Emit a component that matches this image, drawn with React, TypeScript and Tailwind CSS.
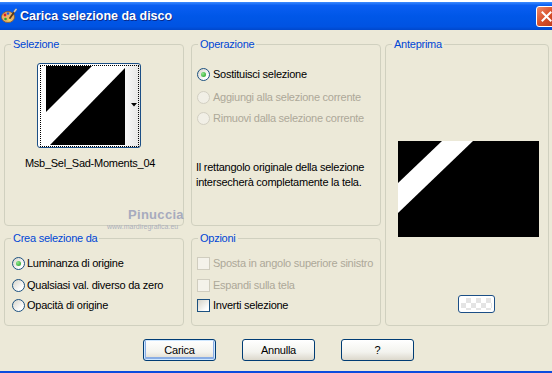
import React from "react";

function Radio({ checked = false, disabled = false }: { checked?: boolean; disabled?: boolean }) {
  return (
    <span
      className={
        disabled
          ? "w-[13px] h-[13px] rounded-full border border-[#D2CFC2] bg-[#F1EFE6] shrink-0 flex items-center justify-center"
          : "w-[13px] h-[13px] rounded-full border border-[#1C5180] bg-[linear-gradient(135deg,#D6D3C8,#FFFFFF_75%)] shrink-0 flex items-center justify-center"
      }
    >
      {checked && (
        <span className="w-[5px] h-[5px] rounded-full bg-[radial-gradient(circle_at_35%_35%,#8EE88E,#1E9A1E)]" />
      )}
    </span>
  );
}

function Check({ disabled = false }: { disabled?: boolean }) {
  return (
    <span
      className={
        disabled
          ? "w-[13px] h-[13px] border border-[#D0CDBF] bg-[#F4F2EA] shrink-0"
          : "w-[13px] h-[13px] border border-[#1C5180] bg-[linear-gradient(135deg,#D6D3C8,#FFFFFF_80%)] shrink-0"
      }
    />
  );
}

function Group({ title, className, children }: { title: string; className: string; children?: React.ReactNode }) {
  return (
    <fieldset className={"border border-[#D0D0BF] rounded-[4px] " + className}>
      <legend className="ml-[6px] px-[2px] leading-[14px] text-[#0046D5]">{title}</legend>
      {children}
    </fieldset>
  );
}

function XPButton({ label, def = false }: { label: string; def?: boolean }) {
  return (
    <div
      className={
        def
          ? "w-[73px] h-[22px] rounded-[3px] border border-[#003C74] bg-[linear-gradient(to_bottom,#FFFFFF,#F3F3EE_60%,#DCD8CC)] shadow-[inset_0_0_0_1px_#CEE7FF,inset_0_-1px_0_2px_#89ADE4] flex items-center justify-center"
          : "w-[73px] h-[22px] rounded-[3px] border border-[#003C74] bg-[linear-gradient(to_bottom,#FFFFFF,#F3F3EE_60%,#DCD8CC)] flex items-center justify-center"
      }
    >
      {label}
    </div>
  );
}

export default function App() {
  return (
    <div className="relative w-[552px] h-[373px] overflow-hidden bg-[#ECE9D8] font-['Liberation_Sans',Arial,sans-serif] text-[11px] tracking-[-0.25px] text-black flex flex-col">
      {/* strip of window behind */}
      <div className="h-[2px] bg-white shrink-0" />
      {/* title bar */}
      <div className="h-[28px] shrink-0 flex items-center bg-[linear-gradient(to_bottom,#3D8BFF_0%,#0A5EF2_12%,#0057E8_50%,#0053E2_88%,#0047CC_100%)]">
        <svg width="16" height="16" viewBox="0 0 16 16" className="ml-[1px] shrink-0">
          <ellipse cx="7" cy="9" rx="6.5" ry="5.5" fill="#E9B56A" stroke="#8A5A2A" strokeWidth="0.8" />
          <circle cx="4" cy="7" r="1.4" fill="#D22" />
          <circle cx="7" cy="5.5" r="1.3" fill="#2A5BD8" />
          <circle cx="4.5" cy="11" r="1.3" fill="#2CA02C" />
          <circle cx="8.5" cy="12" r="1.2" fill="#F0E040" />
          <path d="M9 10 L15 1.5" stroke="#5A3A1A" strokeWidth="1.8" strokeLinecap="round" />
          <path d="M13.5 3.5 L15 1.5" stroke="#C8C8C8" strokeWidth="1.8" strokeLinecap="round" />
        </svg>
        <span className="ml-[3px] text-white font-bold text-[12.5px] tracking-[0px] [text-shadow:1px_1px_0_#0B2A8A]">
          Carica selezione da disco
        </span>
        <div className="ml-auto mr-[-5px] w-[21px] h-[21px] shrink-0 rounded-[3px] border border-white bg-[linear-gradient(135deg,#F08A68,#D8502A_50%,#B8381A)] flex items-center justify-center">
          <svg width="11" height="11" viewBox="0 0 11 11">
            <path d="M1.5 1.5 L9.5 9.5 M9.5 1.5 L1.5 9.5" stroke="white" strokeWidth="2" strokeLinecap="square" />
          </svg>
        </div>
      </div>

      {/* body */}
      <div className="flex pt-[7px] pl-[4px] shrink-0">
        {/* left column */}
        <div className="w-[180px] flex flex-col gap-[5px]">
          <Group title="Selezione" className="h-[189px]">
            <div className="ml-[32px] mt-[12px] relative w-[104px] h-[85px] rounded-[3px] border border-[#1C4F86] bg-[linear-gradient(to_right,#FFFFFF_80%,#E4E4E4)]">
              <div className="absolute left-[2px] top-[1px] right-[1px] bottom-[0px] border border-dotted border-black" />
              <svg width="79" height="79" viewBox="0 0 79 79" className="absolute left-[8px] top-[2px]">
                <rect width="79" height="79" fill="black" />
                <polygon points="0,46 46,0 79,0 79,2 4,79 0,79" fill="white" />
              </svg>
              <svg width="6" height="4" viewBox="0 0 6 4" className="absolute right-[3px] top-[39px]">
                <polygon points="0,0 6,0 3,3.5" fill="black" />
              </svg>
            </div>
            <div className="w-[170px] mt-[9px] text-center leading-[13px]">Msb_Sel_Sad-Moments_04</div>
          </Group>
          <Group title="Crea selezione da" className="h-[95px]">
            <div className="pl-[7px] mt-[12px] flex flex-col">
              <div className="h-[13px] flex items-center gap-[2px]">
                <Radio checked />
                <span>Luminanza di origine</span>
              </div>
              <div className="h-[13px] mt-[9px] flex items-center gap-[2px]">
                <Radio />
                <span>Qualsiasi val. diverso da zero</span>
              </div>
              <div className="h-[13px] mt-[7px] flex items-center gap-[2px]">
                <Radio />
                <span>Opacità di origine</span>
              </div>
            </div>
          </Group>
        </div>

        {/* middle column */}
        <div className="ml-[7px] w-[190px] flex flex-col gap-[5px]">
          <Group title="Operazione" className="h-[189px]">
            <div className="pl-[5px] mt-[17px] flex flex-col">
              <div className="h-[13px] flex items-center gap-[3px]">
                <Radio checked />
                <span>Sostituisci selezione</span>
              </div>
              <div className="h-[13px] mt-[10px] flex items-center gap-[3px] text-[#ACA899]">
                <Radio disabled />
                <span>Aggiungi alla selezione corrente</span>
              </div>
              <div className="h-[13px] mt-[8px] flex items-center gap-[3px] text-[#ACA899]">
                <Radio disabled />
                <span>Rimuovi dalla selezione corrente</span>
              </div>
            </div>
            <p className="pl-[4px] mt-[35px] leading-[15px]">
              Il rettangolo originale della selezione
              <br />
              intersecherà completamente la tela.
            </p>
          </Group>
          <Group title="Opzioni" className="h-[95px]">
            <div className="pl-[5px] mt-[12px] flex flex-col">
              <div className="h-[13px] flex items-center gap-[3px] text-[#ACA899]">
                <Check disabled />
                <span>Sposta in angolo superiore sinistro</span>
              </div>
              <div className="h-[13px] mt-[9px] flex items-center gap-[3px] text-[#ACA899]">
                <Check disabled />
                <span>Espandi sulla tela</span>
              </div>
              <div className="h-[13px] mt-[7px] flex items-center gap-[3px]">
                <Check />
                <span>Inverti selezione</span>
              </div>
            </div>
          </Group>
        </div>

        {/* right column */}
        <div className="ml-[4px] w-[164px]">
          <Group title="Anteprima" className="h-[289px]">
            <svg width="141" height="96" viewBox="0 0 141 96" className="ml-[12px] mt-[90px] block">
              <rect width="141" height="96" fill="black" />
              <polygon points="44,0 75,0 0,72 0,42" fill="white" />
            </svg>
            <div className="ml-[72px] mt-[58px] w-[37px] h-[18px] rounded-[3px] border border-[#1C4F86] bg-white p-[2px]">
              <div className="w-full h-full bg-[conic-gradient(#E4E4E4_25%,#FFFFFF_0_50%,#E4E4E4_0_75%,#FFFFFF_0)] bg-[length:10px_10px]" />
            </div>
          </Group>
        </div>
      </div>

      {/* buttons */}
      <div className="mt-[13px] pl-[143px] flex gap-[26px] shrink-0">
        <XPButton label="Carica" def />
        <XPButton label="Annulla" />
        <XPButton label="?" />
      </div>

      <div className="flex-1" />
      <div className="h-[2px] bg-[#0A4CDE] shrink-0" />

      {/* watermark */}
      <div className="absolute left-[128px] top-[207px] text-[13px] font-bold tracking-[0.3px] text-[#A7ABBE] leading-[16px]">
        Pinuccia
      </div>
      <div className="absolute left-[107px] top-[223px] text-[7px] tracking-[0px] text-[#ADB0BC] leading-[8px]">
        www.mardiregrafica.eu
      </div>
    </div>
  );
}
